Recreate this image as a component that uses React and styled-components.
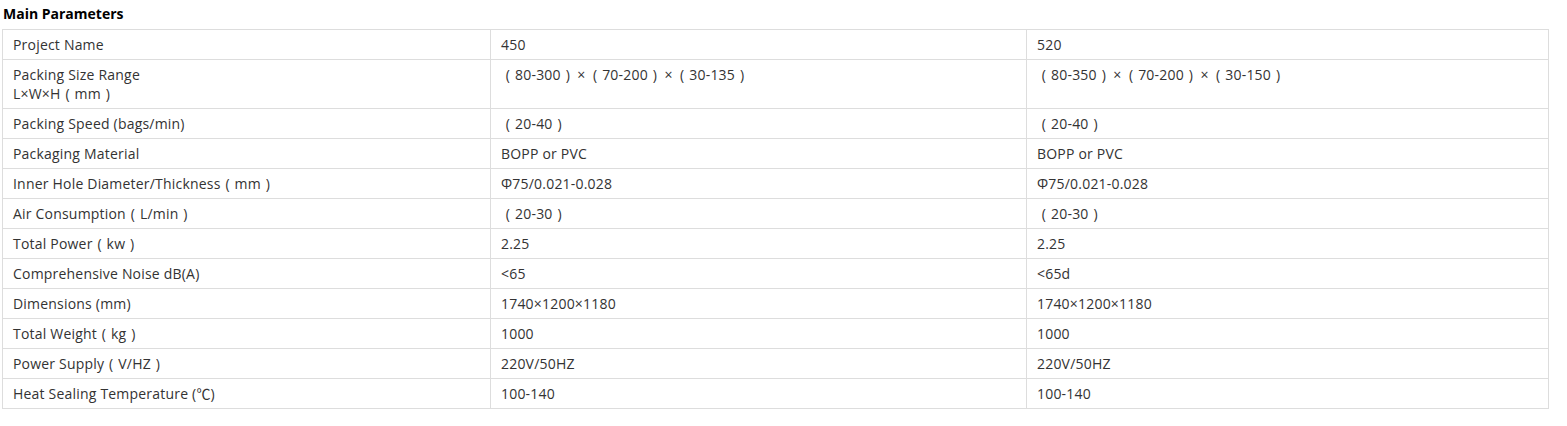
import React from 'react';
import styled, { createGlobalStyle } from 'styled-components';

const GlobalStyle = createGlobalStyle`
  body {
    margin: 0;
    background: #fff;
    font-family: 'Open Sans', 'Noto Sans CJK SC', sans-serif;
    color: #333;
  }
`;

const Wrapper = styled.div`
  padding: 4px 2px 0 2px;
  width: 1546px;
`;

const Title = styled.h3`
  margin: 0 0 0 1px;
  height: 25px;
  font-size: 14px;
  line-height: 20px;
  font-weight: 700;
  color: #000;
`;

const Table = styled.table`
  width: 1546px;
  border-collapse: collapse;
  table-layout: fixed;
  font-size: 14px;
  letter-spacing: 0.2px;
`;

const Col = styled.col`
  width: ${(p) => p.$w}px;
`;

const Cell = styled.td`
  border: 1px solid #ddd;
  padding: 5px 10px;
  line-height: 19px;
  vertical-align: top;
  color: #333;
  white-space: pre-wrap;
`;

// full-width brackets, drawn as a centred paren in a wider box
const o = '\u2004(\u2004';
const c = '\u2004)\u2004';
const x = '\u2006×\u2006';

const rows = [
  ['Project Name', '450', '520'],
  [`Packing Size Range\nL×W×H${o}mm${c}`, `${o}80-300${c}${x}${o}70-200${c}${x}${o}30-135${c}`, `${o}80-350${c}${x}${o}70-200${c}${x}${o}30-150${c}`],
  ['Packing Speed (bags/min)', `${o}20-40${c}`, `${o}20-40${c}`],
  ['Packaging Material', 'BOPP or PVC', 'BOPP or PVC'],
  [`Inner Hole Diameter/Thickness${o}mm${c}`, 'Φ75/0.021-0.028', 'Φ75/0.021-0.028'],
  [`Air Consumption${o}L/min${c}`, `${o}20-30${c}`, `${o}20-30${c}`],
  [`Total Power${o}kw${c}`, '2.25', '2.25'],
  ['Comprehensive Noise dB(A)', '<65', '<65d'],
  ['Dimensions (mm)', '1740×1200×1180', '1740×1200×1180'],
  [`Total Weight${o}kg${c}`, '1000', '1000'],
  [`Power Supply${o}V/HZ${c}`, '220V/50HZ', '220V/50HZ'],
  ['Heat Sealing Temperature (℃)', '100-140', '100-140'],
];

export default function App() {
  return (
    <Wrapper>
      <GlobalStyle />
      <Title>Main Parameters</Title>
      <Table>
        <colgroup>
          <Col $w={488} />
          <Col $w={536} />
          <Col $w={522} />
        </colgroup>
        <tbody>
          {rows.map((r, i) => (
            <tr key={i}>
              {r.map((text, j) => (
                <Cell key={j}>{text}</Cell>
              ))}
            </tr>
          ))}
        </tbody>
      </Table>
    </Wrapper>
  );
}
